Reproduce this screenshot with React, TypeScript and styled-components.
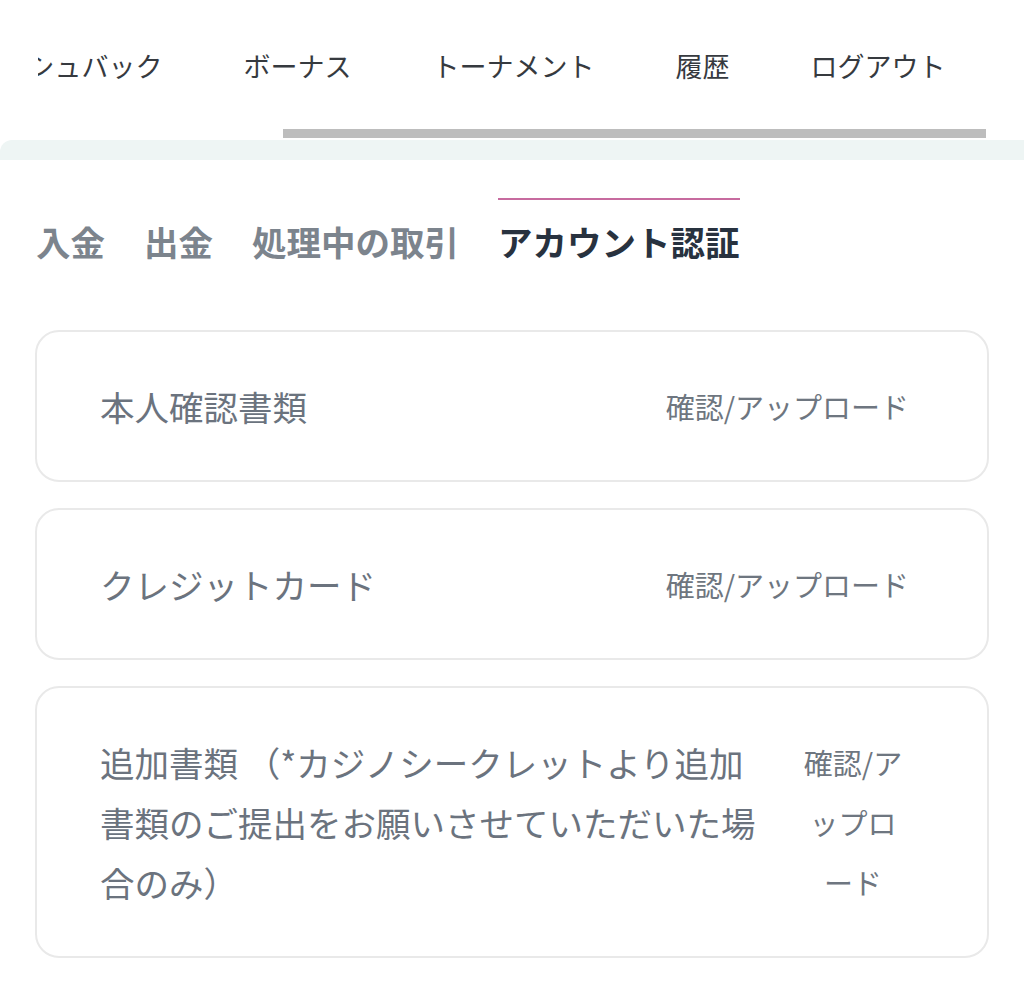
import React from "react";
import styled, { createGlobalStyle } from "styled-components";

const GlobalStyle = createGlobalStyle`
  html, body {
    margin: 0;
    padding: 0;
    background: #ffffff;
  }
  body {
    font-family: "Noto Sans CJK JP", "Noto Sans", sans-serif;
    -webkit-font-smoothing: antialiased;
  }
`;

const Page = styled.div`
  width: 1024px;
  display: flex;
  flex-direction: column;
  background: #ffffff;
`;

const NavViewport = styled.nav`
  margin: 0 38px;
  height: 129px;
  padding-top: 2px;
  box-sizing: border-box;
  overflow: hidden;
  display: flex;
  justify-content: flex-end;
  align-items: center;
`;

const NavItem = styled.a`
  flex-shrink: 0;
  white-space: nowrap;
  padding: 0 40.5px;
  font-size: 27px;
  line-height: 40px;
  color: #363a3f;
  text-decoration: none;
`;

const ScrollTrack = styled.div`
  margin: 0 38px;
  height: 9px;
  display: flex;
`;

const ScrollThumb = styled.div`
  margin-left: 245px;
  flex: 1;
  background: #bdbdbd;
`;

const Band = styled.div`
  margin-top: 2px;
  height: 20px;
  background: #eef5f4;
  border-top-left-radius: 12px;
`;

const Content = styled.main`
  padding: 38px 35px 40px;
  display: flex;
  flex-direction: column;
`;

const Tabs = styled.div`
  display: flex;
  gap: 39px;
  padding-left: 1px;
`;

const Tab = styled.button<{ $active?: boolean }>`
  border: none;
  background: none;
  margin: 0;
  padding: 19px 0 0;
  border-top: 2px solid ${(p) => (p.$active ? "#c76b9f" : "transparent")};
  font-family: inherit;
  font-size: 34.5px;
  font-weight: 700;
  line-height: 45px;
  color: ${(p) => (p.$active ? "#28323f" : "#7c848d")};
  cursor: pointer;
`;

const CardList = styled.div`
  margin-top: 66px;
  display: flex;
  flex-direction: column;
  gap: 26px;
`;

const Card = styled.div`
  border: 2px solid #e9e9e9;
  border-radius: 24px;
  padding: 44px 78px 44px 63px;
  display: flex;
  justify-content: space-between;
  align-items: center;
  gap: 36px;
`;

const Label = styled.div`
  flex: 1 1 auto;
  min-width: 0;
  font-size: 34.5px;
  line-height: 60px;
  color: #6b737e;
`;

const Action = styled.a`
  flex: 0 10 auto;
  min-width: 112px;
  text-align: center;
  font-size: 29px;
  line-height: 60px;
  color: #6e7680;
  text-decoration: none;
  cursor: pointer;
`;

const navItems = ["入出金", "キャッシュバック", "ボーナス", "トーナメント", "履歴", "ログアウト"];
const tabs = ["入金", "出金", "処理中の取引", "アカウント認証"];
const docs = [
  "本人確認書類",
  "クレジットカード",
  "追加書類 （*カジノシークレットより追加書類のご提出をお願いさせていただいた場合のみ）",
];

export default function App() {
  return (
    <Page>
      <GlobalStyle />
      <NavViewport>
        {navItems.map((n) => (
          <NavItem key={n}>{n}</NavItem>
        ))}
      </NavViewport>
      <ScrollTrack>
        <ScrollThumb />
      </ScrollTrack>
      <Band />
      <Content>
        <Tabs>
          {tabs.map((t) => (
            <Tab key={t} $active={t === "アカウント認証"}>
              {t}
            </Tab>
          ))}
        </Tabs>
        <CardList>
          {docs.map((d) => (
            <Card key={d}>
              <Label>{d}</Label>
              <Action>確認/アップロード</Action>
            </Card>
          ))}
        </CardList>
      </Content>
    </Page>
  );
}
